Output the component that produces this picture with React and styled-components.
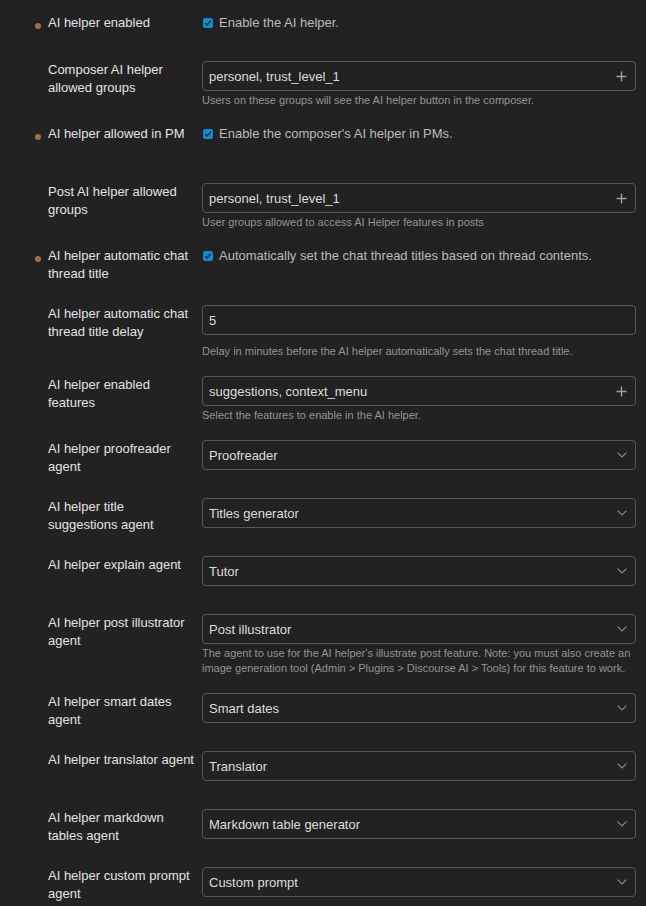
import React from "react";
import styled, { createGlobalStyle } from "styled-components";

const GlobalStyle = createGlobalStyle`
  html, body {
    margin: 0;
    padding: 0;
    background-color: #222222;
  }
  body {
    font-family: "Liberation Sans", Arial, sans-serif;
  }
`;

const Page = styled.div`
  display: flex;
  flex-direction: column;
  padding: 14px 10px 0 48px;
  background-color: #222222;
  min-height: 100vh;
  box-sizing: border-box;
`;

const Setting = styled.div`
  display: flex;
  flex-direction: row;
  align-items: flex-start;
  padding-bottom: 17px;
`;

const Label = styled.div`
  position: relative;
  flex: 0 0 147px;
  margin-right: 7px;
  font-size: 13px;
  line-height: 18px;
  color: #e2e2e2;

  &::before {
    content: "";
    display: ${(p) => (p.$modified ? "block" : "none")};
    position: absolute;
    left: -13px;
    top: 9px;
    width: 6px;
    height: 6px;
    border-radius: 50%;
    background-color: #a0703f;
  }
`;

const Value = styled.div`
  flex: 1;
  display: flex;
  flex-direction: column;
  min-height: ${(p) => (p.$compact ? "30px" : "41px")};
`;

const CheckRow = styled.label`
  display: flex;
  flex-direction: row;
  align-items: center;
  gap: 6px;
  font-size: 13px;
  line-height: 18px;
  color: #bbbbbb;
  padding-left: 1px;
`;

const Box = styled.span`
  display: flex;
  align-items: center;
  justify-content: center;
  width: 10px;
  height: 10px;
  border-radius: 2px;
  background-color: #0e8dd0;
  margin-top: -1px;
`;

const Field = styled.div`
  display: flex;
  flex-direction: row;
  align-items: center;
  justify-content: space-between;
  height: 30px;
  box-sizing: border-box;
  border: 1px solid #595959;
  border-radius: 4px;
  padding: 0 8px 0 6px;
  background-color: #222222;
  font-size: 13px;
  color: #dddddd;
  margin-bottom: ${(p) => (p.$text ? "9px" : "0")};
`;

const Desc = styled.div`
  font-size: 11px;
  line-height: 15px;
  color: #949494;
  margin-top: ${(p) => (p.$afterText ? "0" : "2px")};
`;

const Check = () => (
  <Box>
    <svg width="8" height="8" viewBox="0 0 8 8">
      <path d="M1.2 4.2 L3.1 6 L6.8 1.8" fill="none" stroke="#1d2a33" strokeWidth="1.5" />
    </svg>
  </Box>
);

const Plus = () => (
  <svg width="11" height="11" viewBox="0 0 11 11">
    <path d="M5.5 0.5 V10.5 M0.5 5.5 H10.5" stroke="#a0a0a0" strokeWidth="1.4" />
  </svg>
);

const Chevron = () => (
  <svg width="10" height="6" viewBox="0 0 10 6">
    <path d="M0.6 0.6 L5 5 L9.4 0.6" fill="none" stroke="#8a8a8a" strokeWidth="1.2" />
  </svg>
);

const settings = [
  { label: "AI helper enabled", modified: true, compact: true, type: "check", text: "Enable the AI helper." },
  {
    label: "Composer AI helper allowed groups",
    type: "list",
    text: "personel, trust_level_1",
    desc: "Users on these groups will see the AI helper button in the composer.",
  },
  { label: "AI helper allowed in PM", modified: true, type: "check", text: "Enable the composer's AI helper in PMs." },
  {
    label: "Post AI helper allowed groups",
    type: "list",
    text: "personel, trust_level_1",
    desc: "User groups allowed to access AI Helper features in posts",
  },
  {
    label: "AI helper automatic chat thread title",
    modified: true,
    type: "check",
    text: "Automatically set the chat thread titles based on thread contents.",
  },
  {
    label: "AI helper automatic chat thread title delay",
    type: "text",
    text: "5",
    desc: "Delay in minutes before the AI helper automatically sets the chat thread title.",
  },
  {
    label: "AI helper enabled features",
    type: "list",
    text: "suggestions, context_menu",
    desc: "Select the features to enable in the AI helper.",
  },
  { label: "AI helper proofreader agent", type: "select", text: "Proofreader" },
  { label: "AI helper title suggestions agent", type: "select", text: "Titles generator" },
  { label: "AI helper explain agent", type: "select", text: "Tutor" },
  {
    label: "AI helper post illustrator agent",
    type: "select",
    text: "Post illustrator",
    desc: "The agent to use for the AI helper's illustrate post feature. Note: you must also create an image generation tool (Admin > Plugins > Discourse AI > Tools) for this feature to work.",
  },
  { label: "AI helper smart dates agent", type: "select", text: "Smart dates" },
  { label: "AI helper translator agent", type: "select", text: "Translator" },
  { label: "AI helper markdown tables agent", type: "select", text: "Markdown table generator" },
  { label: "AI helper custom prompt agent", type: "select", text: "Custom prompt" },
];

const Control = ({ item }) => {
  if (item.type === "check") {
    return (
      <CheckRow>
        <Check />
        {item.text}
      </CheckRow>
    );
  }
  return (
    <Field $text={item.type === "text"}>
      <span>{item.text}</span>
      {item.type === "list" && <Plus />}
      {item.type === "select" && <Chevron />}
    </Field>
  );
};

const App = () => {
  return (
    <Page>
      <GlobalStyle />
      {settings.map((item) => (
        <Setting key={item.label}>
          <Label $modified={item.modified}>{item.label}</Label>
          <Value $compact={item.compact}>
            <Control item={item} />
            {item.desc && <Desc $afterText={item.type === "text"}>{item.desc}</Desc>}
          </Value>
        </Setting>
      ))}
    </Page>
  );
};

export default App;
